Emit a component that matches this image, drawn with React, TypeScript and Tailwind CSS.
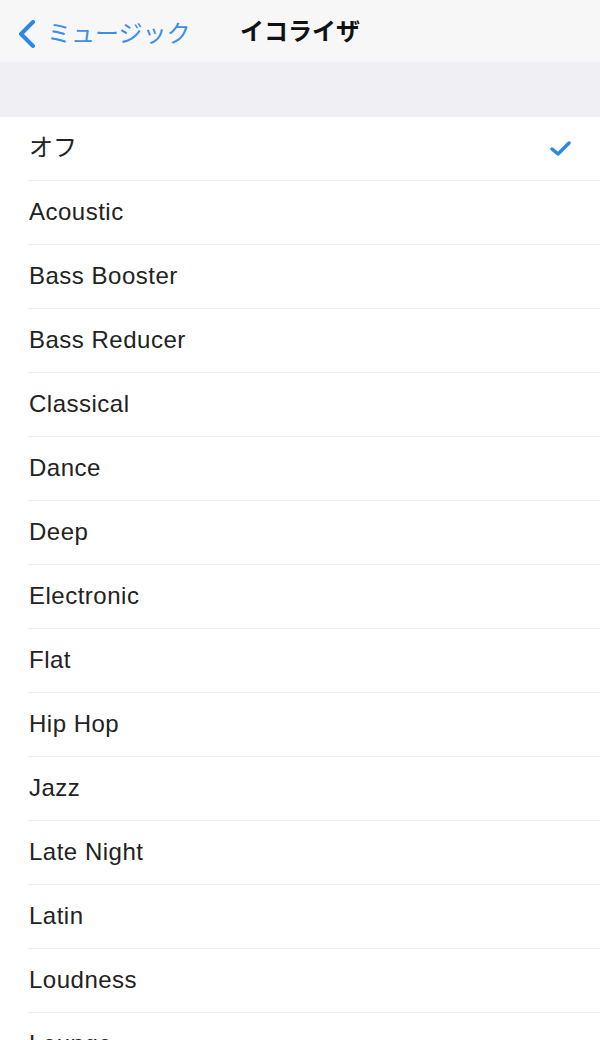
import React from "react";

const items = [
  "Acoustic",
  "Bass Booster",
  "Bass Reducer",
  "Classical",
  "Dance",
  "Deep",
  "Electronic",
  "Flat",
  "Hip Hop",
  "Jazz",
  "Late Night",
  "Latin",
  "Loudness",
  "Lounge",
];

const font = { fontFamily: '"Liberation Sans", "Noto Sans CJK JP", sans-serif' };

export default function App() {
  return (
    <div className="w-[600px] h-[1040px] overflow-hidden bg-white" style={font}>
      <div className="h-[62px] bg-[#f7f7f8] flex items-center relative">
        <div className="flex items-center pl-[17px] mt-[5px]">
          <svg width="20" height="28" viewBox="0 0 20 28" className="mr-[10px]">
            <path d="M16 2 L4 14 L16 26" fill="none" stroke="#2f86e6" strokeWidth="4" strokeLinecap="round" strokeLinejoin="round" />
          </svg>
          <span className="text-[24px] text-[#3b8fe8] leading-none">ミュージック</span>
        </div>
        <span className="absolute left-[240px] top-[20px] text-[24px] font-bold text-[#111] leading-none">イコライザ</span>
      </div>
      <div className="h-[55px] bg-[#efeff4]" />
      <div className="flex flex-col">
        <div className="h-[64px] flex items-center pl-[29px] pr-[28px] relative">
          <span className="text-[24px] text-[#222] -mt-[2px]">オフ</span>
          <svg width="22" height="17" viewBox="0 0 22 17" className="ml-auto -mt-[2px]">
            <path d="M2 9 L8 14 L19 3" fill="none" stroke="#2f86e6" strokeWidth="3.5" strokeLinecap="round" strokeLinejoin="round" />
          </svg>
          <div className="absolute left-[28px] right-0 bottom-0 h-px bg-[#ededf0]" />
        </div>
        {items.map((it) => (
          <div key={it} className="h-[64px] flex items-center pl-[29px] relative">
            <span className="text-[24px] tracking-[0.5px] text-[#222] -mt-[2px]">{it}</span>
            <div className="absolute left-[28px] right-0 bottom-0 h-px bg-[#ededf0]" />
          </div>
        ))}
      </div>
    </div>
  );
}
